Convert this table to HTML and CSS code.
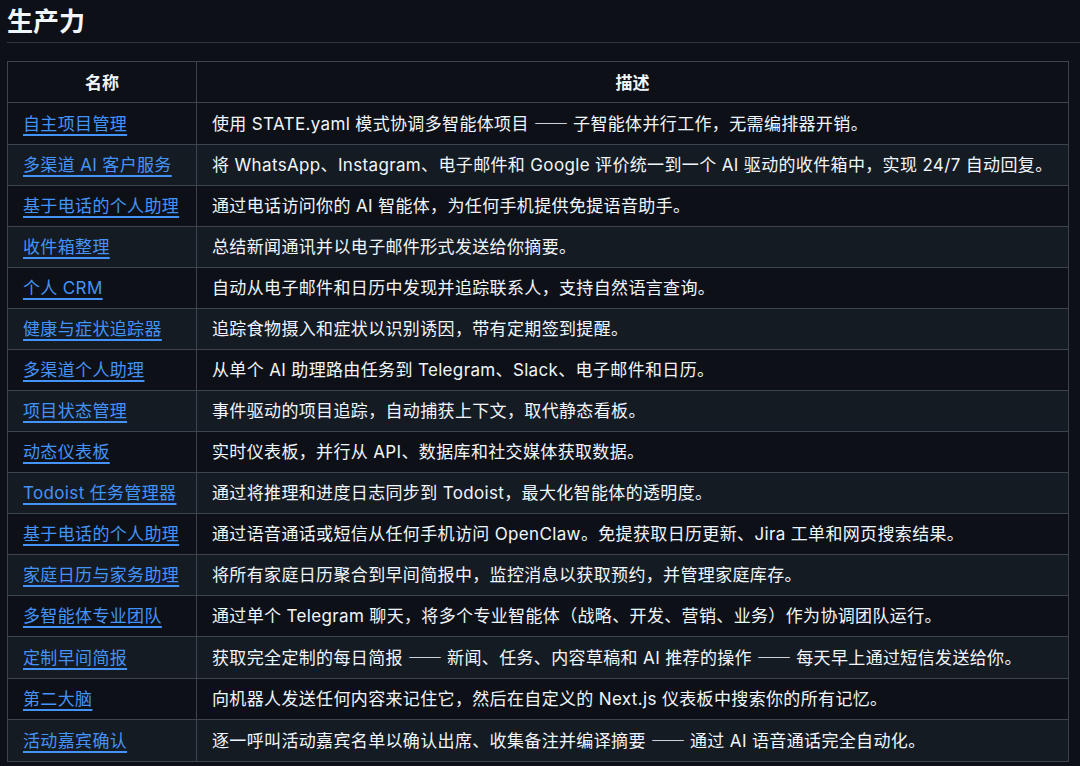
FILE: index.html
```html
<!DOCTYPE html>
<html lang="zh-CN">
<head>
<meta charset="utf-8">
<title>生产力</title>
<link rel="stylesheet" href="styles.css">
</head>
<body>
<div class="page">
  <h2 class="section-title">生产力</h2>
  <table class="md-table">
    <colgroup>
      <col class="col-name">
      <col class="col-desc">
    </colgroup>
    <thead>
      <tr><th>名称</th><th>描述</th></tr>
    </thead>
    <tbody>
      <tr><td><a href="#">自主项目管理</a></td><td>使用 STATE.yaml 模式协调多智能体项目 <span class="dash">——</span> 子智能体并行工作，无需编排器开销。</td></tr>
      <tr><td><a href="#">多渠道 AI 客户服务</a></td><td>将 WhatsApp、Instagram、电子邮件和 Google 评价统一到一个 AI 驱动的收件箱中，实现 24/7 自动回复。</td></tr>
      <tr><td><a href="#">基于电话的个人助理</a></td><td>通过电话访问你的 AI 智能体，为任何手机提供免提语音助手。</td></tr>
      <tr><td><a href="#">收件箱整理</a></td><td>总结新闻通讯并以电子邮件形式发送给你摘要。</td></tr>
      <tr><td><a href="#">个人 CRM</a></td><td>自动从电子邮件和日历中发现并追踪联系人，支持自然语言查询。</td></tr>
      <tr><td><a href="#">健康与症状追踪器</a></td><td>追踪食物摄入和症状以识别诱因，带有定期签到提醒。</td></tr>
      <tr><td><a href="#">多渠道个人助理</a></td><td>从单个 AI 助理路由任务到 Telegram、Slack、电子邮件和日历。</td></tr>
      <tr><td><a href="#">项目状态管理</a></td><td>事件驱动的项目追踪，自动捕获上下文，取代静态看板。</td></tr>
      <tr><td><a href="#">动态仪表板</a></td><td>实时仪表板，并行从 API、数据库和社交媒体获取数据。</td></tr>
      <tr><td><a href="#">Todoist 任务管理器</a></td><td>通过将推理和进度日志同步到 Todoist，最大化智能体的透明度。</td></tr>
      <tr><td><a href="#">基于电话的个人助理</a></td><td>通过语音通话或短信从任何手机访问 OpenClaw。免提获取日历更新、Jira 工单和网页搜索结果。</td></tr>
      <tr><td><a href="#">家庭日历与家务助理</a></td><td>将所有家庭日历聚合到早间简报中，监控消息以获取预约，并管理家庭库存。</td></tr>
      <tr><td><a href="#">多智能体专业团队</a></td><td>通过单个 Telegram 聊天，将多个专业智能体（战略、开发、营销、业务）作为协调团队运行。</td></tr>
      <tr><td><a href="#">定制早间简报</a></td><td>获取完全定制的每日简报 <span class="dash">——</span> 新闻、任务、内容草稿和 AI 推荐的操作 <span class="dash">——</span> 每天早上通过短信发送给你。</td></tr>
      <tr><td><a href="#">第二大脑</a></td><td>向机器人发送任何内容来记住它，然后在自定义的 Next.js 仪表板中搜索你的所有记忆。</td></tr>
      <tr><td><a href="#">活动嘉宾确认</a></td><td>逐一呼叫活动嘉宾名单以确认出席、收集备注并编译摘要 <span class="dash">——</span> 通过 AI 语音通话完全自动化。</td></tr>
    </tbody>
  </table>
</div>
</body>
</html>
```

FILE: styles.css
```css
html, body {
  margin: 0;
  padding: 0;
  background: #0d1117;
  overflow: hidden;
}

body {
  color: #f0f6fc;
  font-family: Inter, "Noto Sans CJK SC", "Noto Sans", sans-serif;
  font-size: 17px;
}

.page {
  padding-left: 7px;
  width: 1100px;
}

.section-title {
  margin: 3px 0 18px 0;
  padding-bottom: 6px;
  font-size: 26px;
  line-height: 33px;
  font-weight: 700;
  font-family: "Noto Sans CJK SC", sans-serif;
  border-bottom: 1px solid #30363d;
}

.md-table {
  border-collapse: collapse;
  table-layout: fixed;
  width: 1061px;
}

.col-name { width: 189px; }
.col-desc { width: 872px; }

.md-table th,
.md-table td {
  border: 1px solid #3d444d;
  padding: 7px 15px;
  line-height: 26px;
  white-space: nowrap;
  text-align: left;
}

.md-table td {
  letter-spacing: 0.35px;
}

.md-table th {
  text-align: center;
  font-weight: 700;
  font-family: "Noto Sans CJK SC", sans-serif;
}

.md-table tbody tr:nth-child(even) {
  background: #151b23;
}

.md-table a {
  color: #4493f8;
  text-decoration: underline;
  text-decoration-thickness: 2px;
  text-underline-offset: 4px;
}

.dash {
  font-family: "Noto Sans CJK SC", sans-serif;
  letter-spacing: 0;
}
```
